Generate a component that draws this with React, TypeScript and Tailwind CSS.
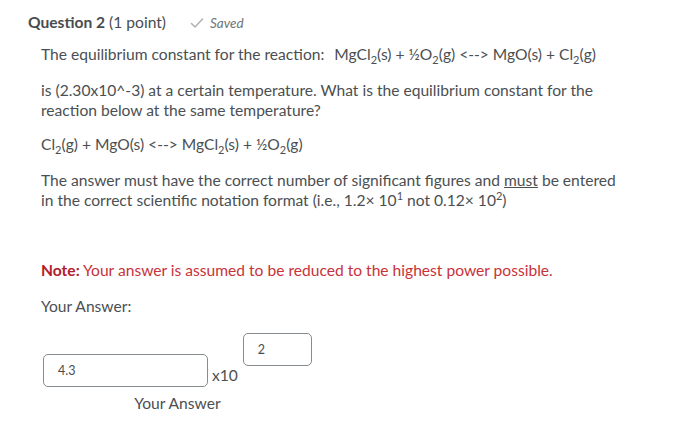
import React from "react";

const Sub: React.FC<{ children: React.ReactNode }> = ({ children }) => (
  <sub className="text-[11px] relative top-[4px] bottom-auto align-baseline">{children}</sub>
);

const Sup: React.FC<{ children: React.ReactNode }> = ({ children }) => (
  <sup className="text-[11px] relative top-[-6px] align-baseline">{children}</sup>
);

const App: React.FC = () => {
  return (
    <div className="w-[691px] h-[422px] bg-white text-[#4b4f52] font-['Lato','Liberation_Sans',sans-serif] overflow-hidden">
      {/* Question header */}
      <div className="flex items-center pl-[28px] pt-[13px] h-[33px]">
        <span className="text-[15.6px] font-bold text-[#494c4e]">Question 2</span>
        <span className="text-[15.6px] ml-[4px] text-[#494c4e]">(1 point)</span>
        <span className="flex items-center ml-[24px] text-[#6e7376]">
          <svg width="14" height="12" viewBox="0 0 14 12" className="mr-[6px]">
            <path d="M1.5 6.5 L5 10 L12.5 2" fill="none" stroke="#b0b3b5" strokeWidth="1.6" strokeLinecap="round" strokeLinejoin="round" />
          </svg>
          <span className="italic text-[13.5px]">Saved</span>
        </span>
      </div>

      {/* Question body */}
      <div className="pl-[41px] w-[620px] text-[15.6px] leading-[20px]">
        <p className="mt-[11px]">
          The equilibrium constant for the reaction:<span className="inline-block w-[6px]" /> MgCl<Sub>2</Sub>(s) + ½O<Sub>2</Sub>(g) &lt;--&gt; MgO(s) + Cl<Sub>2</Sub>(g)
        </p>
        <p className="mt-[16px]">
          is (2.30x10^-3) at a certain temperature. What is the equilibrium constant for the reaction below at the same temperature?
        </p>
        <p className="mt-[14px]">
          Cl<Sub>2</Sub>(g) + MgO(s) &lt;--&gt; MgCl<Sub>2</Sub>(s) + ½O<Sub>2</Sub>(g)
        </p>
        <p className="mt-[16px]">
          The answer must have the correct number of significant figures and <span className="underline">must</span> be entered in the correct scientific notation format (i.e., 1.2× 10<Sup>1</Sup> not 0.12× 10<Sup>2</Sup>)
        </p>
        <p className="mt-[50px] text-[#c8323a]">
          <span className="font-bold text-[#b0202b]">Note:</span> Your answer is assumed to be reduced to the highest power possible.
        </p>
        <p className="mt-[16px]">Your Answer:</p>

        {/* Answer entry */}
        <div className="inline-flex flex-col items-center mt-[17px] ml-[2px]">
          <div className="flex items-start">
            <div className="mt-[21px] w-[165px] h-[33px] border border-[#868c8f] rounded-[5px] flex items-center pl-[14px] text-[12.5px] text-[#494c4e]">
              4.3
            </div>
            <span className="mt-[32px] ml-[4px] text-[15.6px] leading-[20px]">x10</span>
            <div className="ml-[5px] w-[69px] h-[33px] border border-[#868c8f] rounded-[5px] flex items-center pl-[14px] text-[12.5px] text-[#494c4e]">
              2
            </div>
          </div>
          <span className="mt-[6px] text-[15.6px] leading-[20px]">Your Answer</span>
        </div>
      </div>
    </div>
  );
};

export default App;
